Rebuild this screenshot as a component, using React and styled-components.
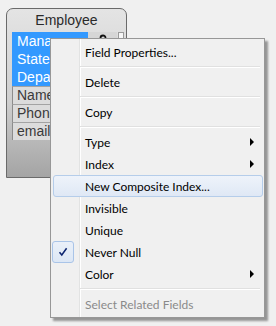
import React from "react";
import styled, { createGlobalStyle, css } from "styled-components";

const Global = createGlobalStyle`
  html, body { margin: 0; padding: 0; background: #f0f0f0; }
  body { font-family: "Noto Sans", "Liberation Sans", sans-serif; }
`;

const Canvas = styled.div`
  position: relative;
  width: 276px;
  height: 326px;
  overflow: hidden;
  background: #f0f0f0;
`;

/* ---------- Entity node on the diagram canvas ---------- */
const Entity = styled.div`
  position: absolute;
  left: 6px;
  top: 8px;
  width: 119px;
  height: 168px;
  border: 1px solid #6a6a6a;
  border-radius: 7px 7px 0 0;
  background: linear-gradient(to bottom, #e4e4e4 0%, #cfcfcf 55%, #a4a4a4 100%);
  display: flex;
  flex-direction: column;
`;

const EntityTitle = styled.div`
  height: 23px;
  line-height: 22px;
  text-align: center;
  font-family: "Liberation Sans", Arial, sans-serif;
  font-size: 14px;
  color: #2a2a2a;
`;

const FieldList = styled.div`
  display: flex;
  margin-left: 5px;
`;

const Fields = styled.div`
  display: flex;
  flex-direction: column;
  width: 105px;
`;

const Field = styled.div`
  height: ${(p) => (p.$selected ? 18 : 17)}px;
  line-height: ${(p) => (p.$selected ? 18 : 17)}px;
  padding-left: 5px;
  font-family: "Liberation Sans", Arial, sans-serif;
  font-size: 14px;
  display: flex;
  overflow: hidden;
  ${(p) =>
    p.$selected
      ? css`
          background: #3399ff;
          color: #ffffff;
        `
      : css`
          background: #dcdcdc;
          color: #3a3a3a;
          border-top: 1px solid #a3a3a3;
          border-left: 1px solid #8c8c8c;
          padding-left: 4px;
        `}
`;

const FieldName = styled.span`
  flex: 1;
`;

const KeyCell = styled.span`
  width: 29px;
  background: #d6d6d6;
  display: flex;
  justify-content: center;
  align-items: flex-start;
  padding-top: 2px;
`;

const ScrollTrack = styled.div`
  width: 4px;
  height: 54px;
  border: 1px solid #9a9a9a;
  background: #f6f6f6;
  margin-left: 1px;
`;

/* ---------- Context menu ---------- */
const Menu = styled.div`
  position: absolute;
  left: 50px;
  top: 38px;
  width: 209px;
  padding: 2px;
  border: 1px solid #979797;
  background:
    linear-gradient(
      to right,
      transparent 28px,
      #e2e3e3 28px,
      #e2e3e3 29px,
      #ffffff 29px,
      #ffffff 30px,
      transparent 30px
    ),
    #f0f0f0;
  box-shadow: 3px 3px 2px rgba(0, 0, 0, 0.38);
  display: flex;
  flex-direction: column;
  font-family: Lato, "Noto Sans", sans-serif;
  font-size: 12px;
`;

const Item = styled.div`
  position: relative;
  height: 22px;
  box-sizing: border-box;
  padding-left: 31px;
  padding-right: 8px;
  display: flex;
  align-items: center;
  color: ${(p) => (p.$disabled ? "#8a8a8a" : "#000000")};
  border: 1px solid transparent;
  border-radius: 3px;
  margin: 0 -1px 0 0;
  ${(p) =>
    p.$hot &&
    css`
      border-color: #b5cdea;
      background: linear-gradient(to bottom, #eef3fa, #dfe8f5);
    `}
`;

const Label = styled.span`
  flex: 1;
  white-space: nowrap;
`;

const SubArrow = styled.span`
  width: 0;
  height: 0;
  border-left: 4px solid #000;
  border-top: 4px solid transparent;
  border-bottom: 4px solid transparent;
`;

const CheckBox = styled.span`
  position: absolute;
  left: -2px;
  top: -1px;
  width: 20px;
  height: 20px;
  border: 1px solid #a9c4e8;
  border-radius: 3px;
  background: linear-gradient(to bottom, #eaf0f9, #dce7f5);
  display: flex;
  align-items: center;
  justify-content: center;
`;

const Separator = styled.div`
  height: 8px;
  display: flex;
  flex-direction: column;
  justify-content: center;
  margin-left: 27px;
  margin-right: 2px;
  &::before {
    content: "";
    height: 1px;
    background: #e0e0e0;
  }
  &::after {
    content: "";
    height: 1px;
    background: #ffffff;
  }
`;

const menu = [
  { label: "Field Properties..." },
  { sep: true },
  { label: "Delete" },
  { sep: true },
  { label: "Copy" },
  { sep: true },
  { label: "Type", sub: true },
  { label: "Index", sub: true },
  { label: "New Composite Index...", hot: true },
  { label: "Invisible" },
  { label: "Unique" },
  { label: "Never Null", checked: true },
  { label: "Color", sub: true },
  { sep: true },
  { label: "Select Related Fields", disabled: true },
];

const fields = [
  { name: "Manager", selected: true, key: true },
  { name: "State", selected: true },
  { name: "Department", selected: true },
  { name: "Name" },
  { name: "Phone" },
  { name: "email" },
];

export default function App() {
  return (
    <>
      <Global />
      <Canvas>
        <Entity>
          <EntityTitle>Employee</EntityTitle>
          <FieldList>
            <Fields>
              {fields.map((f) => (
                <Field key={f.name} $selected={f.selected}>
                  <FieldName>{f.name}</FieldName>
                  {f.key && (
                    <KeyCell>
                      <svg width="8" height="8" viewBox="0 0 8 8">
                        <path d="M1.5 7 V4 A2.5 2.5 0 0 1 6.5 4 V7" fill="none" stroke="#111" strokeWidth="1.8" />
                      </svg>
                    </KeyCell>
                  )}
                </Field>
              ))}
            </Fields>
            <ScrollTrack />
          </FieldList>
        </Entity>

        <Menu>
          {menu.map((m, i) =>
            m.sep ? (
              <Separator key={i} />
            ) : (
              <Item key={i} $hot={m.hot} $disabled={m.disabled}>
                {m.checked && (
                  <CheckBox>
                    <svg width="10" height="10" viewBox="0 0 10 10">
                      <path d="M1.5 5.2 L3.8 8 L8.6 1.2" fill="none" stroke="#0c2470" strokeWidth="1.5" />
                    </svg>
                  </CheckBox>
                )}
                <Label>{m.label}</Label>
                {m.sub && <SubArrow />}
              </Item>
            )
          )}
        </Menu>
      </Canvas>
    </>
  );
}
